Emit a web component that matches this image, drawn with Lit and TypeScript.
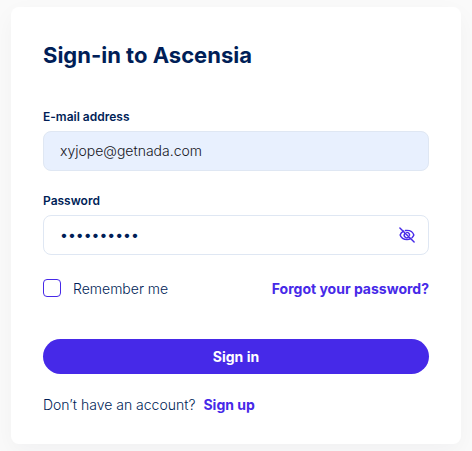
import { LitElement, html, css } from "lit";
import { customElement, state } from "lit/decorators.js";

@customElement("app-root")
export class AppRoot extends LitElement {
  @state() private revealed = false;

  static styles = css`
    :host {
      display: block;
      box-sizing: border-box;
      min-height: 100vh;
      padding: 7px 11px;
      background: #fafafa;
      font-family: Inter, "Liberation Sans", sans-serif;
      font-size: 14px;
      line-height: 20px;
      color: #001e57;
      overflow: hidden;
    }
    *,
    *::before {
      box-sizing: border-box;
    }
    .card {
      padding: 32px 32px 29px;
      background: #fff;
      border-radius: 8px;
      box-shadow: 0 8px 24px rgba(20, 20, 50, 0.04);
    }
    .title {
      margin: 0 0 38px;
      font-size: 22px;
      line-height: 32px;
      font-weight: 700;
    }
    .field {
      display: flex;
      flex-direction: column;
      gap: 6px;
      margin-bottom: 22px;
    }
    .label {
      font-size: 12px;
      line-height: 16px;
      font-weight: 600;
    }
    .box {
      display: flex;
      align-items: center;
      height: 40px;
      padding: 0 13px 0 16px;
      border: 1px solid #dfe7f3;
      border-radius: 8px;
    }
    .filled {
      background: #e8f0fe;
    }
    .input {
      flex: 1;
      min-width: 0;
      padding: 0;
      border: 0;
      outline: 0;
      background: none;
      font: inherit;
      color: inherit;
    }
    .filled .input {
      color: #16161d;
      font-weight: 300;
    }
    .toggle {
      display: flex;
      padding: 0;
      border: 0;
      background: none;
      color: #4629e8;
      cursor: pointer;
    }
    .options {
      display: flex;
      align-items: center;
      justify-content: space-between;
      margin: 24px 0 40px;
    }
    .remember {
      display: flex;
      align-items: flex-start;
      gap: 12px;
      font-weight: 300;
    }
    .check {
      appearance: none;
      width: 18px;
      height: 18px;
      margin: 0;
      border: 1px solid #4629e8;
      border-radius: 4px;
    }
    .check:checked {
      background: #4629e8;
    }
    .link {
      color: #4629e8;
      font-weight: 700;
      text-decoration: none;
    }
    .submit {
      display: block;
      width: 100%;
      height: 35px;
      padding: 0;
      border: 0;
      border-radius: 18px;
      background: #4629e8;
      color: #fff;
      font: inherit;
      font-weight: 700;
      cursor: pointer;
    }
    .signup {
      display: flex;
      flex-wrap: wrap;
      gap: 8px;
      margin: 21px 0 0;
      font-weight: 300;
    }
  `;

  render() {
    return html`
      <main class="card">
        <h1 class="title">Sign-in to Ascensia</h1>
        <form @submit=${(e: Event) => e.preventDefault()}>
          <div class="field">
            <label class="label" for="email">E-mail address</label>
            <div class="box filled">
              <input class="input" id="email" type="email" value="xyjope@getnada.com" />
            </div>
          </div>
          <div class="field">
            <label class="label" for="password">Password</label>
            <div class="box">
              <input
                class="input"
                id="password"
                type=${this.revealed ? "text" : "password"}
                value="abcdefghij"
              />
              <button
                class="toggle"
                type="button"
                aria-label="Show password"
                @click=${() => (this.revealed = !this.revealed)}
              >
                <svg width="16" height="16" viewBox="0 0 18 18" fill="none" stroke="currentColor" stroke-width="1.6" stroke-linecap="round">
                  <path d="M5.2 4.6C3.2 5.6 1.8 7.2 1.3 9c1 3.1 4.1 5.2 7.7 5.2 1.5 0 2.900-.3 4.100-1" />
                  <path d="M7.300 4c.5-.1 1.100-.2 1.700-.2 3.600 0 6.700 2.100 7.700 5.200-.4 1.200-1.100 2.200-2.100 3.100" />
                  <path d="M6.700 7.200A2.900 2.900 0 0 0 10.800 11.300M8.700 6.100A2.900 2.900 0 0 1 11.900 9.300" />
                  <path d="M1 1l16 16" />
                </svg>
              </button>
            </div>
          </div>
          <div class="options">
            <label class="remember"><input class="check" type="checkbox" />Remember me</label>
            <a class="link" href="#forgot">Forgot your password?</a>
          </div>
          <button class="submit" type="submit">Sign in</button>
        </form>
        <p class="signup">
          Don’t have an account?
          <a class="link" href="#signup">Sign up</a>
        </p>
      </main>
    `;
  }
}
